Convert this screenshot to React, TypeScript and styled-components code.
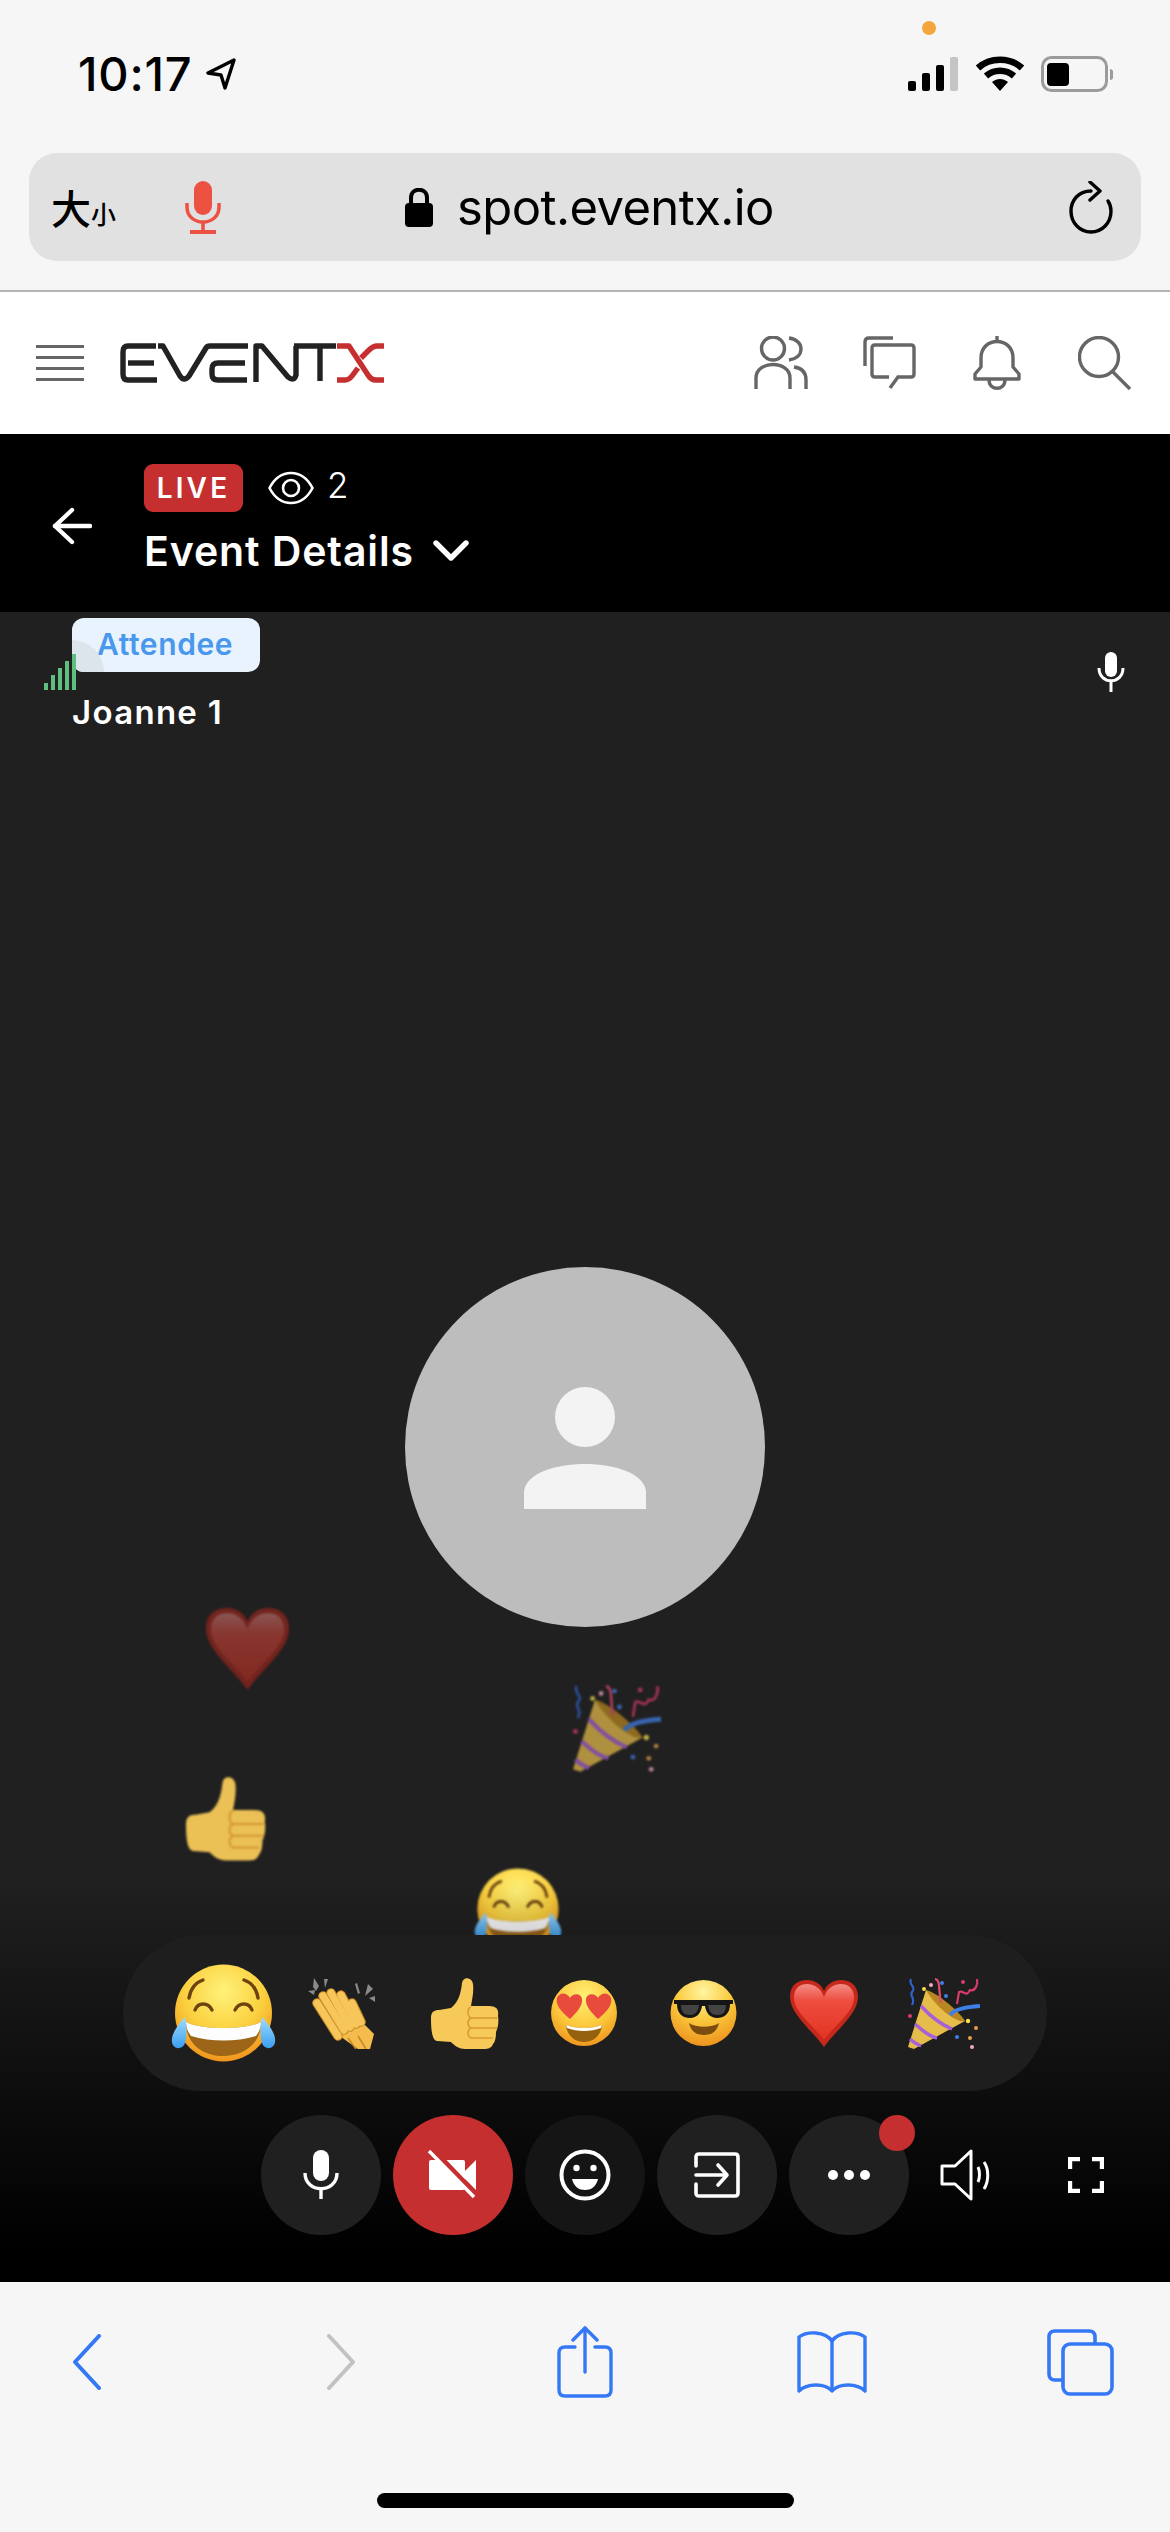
import React from 'react';
import styled, { createGlobalStyle } from 'styled-components';

const GlobalStyle = createGlobalStyle`
  html, body {
    margin: 0;
    padding: 0;
    background: #f6f6f6;
  }
  * {
    box-sizing: border-box;
  }
`;

const Page = styled.div`
  width: 1170px;
  height: 2532px;
  display: flex;
  flex-direction: column;
  overflow: hidden;
  font-family: Inter, 'Liberation Sans', sans-serif;
`;

const BrowserTop = styled.div`
  position: relative;
  height: 292px;
  flex: none;
  background: #f6f6f6;
  border-bottom: 2px solid #b4b4b4;
`;

const StatusBar = styled.div`
  display: flex;
  justify-content: space-between;
  align-items: center;
  height: 38px;
  margin-top: 55px;
  padding: 0 57px 0 78px;
`;

const ClockGroup = styled.div`
  display: flex;
  align-items: center;
  gap: 14px;
`;

const Clock = styled.span`
  font-size: 47px;
  font-weight: 500;
  line-height: 38px;
  letter-spacing: 0.8px;
  color: #000;
`;

const StatusIcons = styled.div`
  display: flex;
  align-items: center;
  gap: 16px;
`;

const PrivacyDot = styled.span`
  position: absolute;
  left: 922px;
  top: 21px;
  width: 14px;
  height: 14px;
  border-radius: 50%;
  background: #f3a63c;
`;

const UrlBar = styled.div`
  display: flex;
  align-items: center;
  height: 108px;
  margin: 60px 29px 0 29px;
  padding: 0 28px 0 22px;
  border-radius: 28px;
  background: #e1e1e1;
`;

const TextSize = styled.span`
  display: flex;
  align-items: baseline;
  width: 134px;
  font-family: 'Noto Sans CJK TC', sans-serif;
  font-weight: 500;
  color: #000;
`;

const TextSizeGlyph = styled.span<{ $size: number }>`
  font-size: ${(p) => p.$size}px;
  line-height: 1;
`;

const UrlCenter = styled.div`
  display: flex;
  align-items: center;
  gap: 24px;
  margin-left: 184px;
  flex: 1;
`;

const UrlText = styled.span`
  font-size: 49px;
  font-weight: 400;
  letter-spacing: -0.6px;
  color: #000;
`;

const SiteHeader = styled.header`
  display: flex;
  align-items: center;
  height: 142px;
  flex: none;
  padding: 0 38px 0 36px;
  background: #fff;
`;

const Burger = styled.div`
  display: flex;
  flex-direction: column;
  gap: 7.6px;
  width: 48px;
`;

const BurgerLine = styled.span`
  height: 3.4px;
  background: #666;
`;

const LogoMark = styled.svg`
  margin-left: 36px;
  margin-right: auto;
`;

const HeaderIcons = styled.div`
  display: flex;
  gap: 54px;
`;

const SessionBar = styled.div`
  display: flex;
  align-items: center;
  height: 178px;
  flex: none;
  padding: 0 0 8px 52px;
  background: #000;
`;

const BackArrow = styled.svg`
  margin-top: 14px;
`;

const SessionInfo = styled.div`
  display: flex;
  flex-direction: column;
  gap: 15px;
  margin-left: 52px;
`;

const SessionMeta = styled.div`
  display: flex;
  align-items: center;
`;

const LiveBadge = styled.span`
  display: flex;
  align-items: center;
  justify-content: center;
  width: 99px;
  height: 48px;
  border-radius: 9px;
  background: #c62f2f;
  color: #fff;
  font-size: 28px;
  font-weight: 600;
  letter-spacing: 3.2px;
`;

const EyeIcon = styled.svg`
  margin-left: 25px;
`;

const ViewerCount = styled.span`
  margin-left: 13px;
  color: #fff;
  font-size: 35px;
  font-weight: 300;
  line-height: 40px;
  margin-top: -6px;
`;

const SessionTitle = styled.div`
  display: flex;
  align-items: center;
  gap: 19px;
  color: #fff;
  font-size: 41px;
  font-weight: 600;
  line-height: 48px;
  letter-spacing: 0.9px;
`;

const Stage = styled.main`
  position: relative;
  flex: 1;
  display: flex;
  align-items: center;
  justify-content: center;
  background: #202020;
  overflow: hidden;
`;

const Participant = styled.div`
  position: absolute;
  left: 72px;
  top: 6px;
  display: flex;
  flex-direction: column;
  align-items: flex-start;
  gap: 22px;
`;

const RoleTag = styled.span`
  position: relative;
  display: block;
  width: 188px;
  height: 54px;
  padding-left: 25px;
  border-radius: 12px;
  background: #e8f3fd;
  color: #4a97ee;
  font-size: 30px;
  font-weight: 600;
  line-height: 52px;
  letter-spacing: 0.6px;
  overflow: hidden;
  &::before {
    content: '';
    position: absolute;
    left: -32px;
    bottom: -32px;
    width: 64px;
    height: 64px;
    border-radius: 50%;
    background: #dde5ec;
  }
`;

const ParticipantName = styled.span`
  color: #fff;
  font-size: 33px;
  font-weight: 600;
  line-height: 36px;
  letter-spacing: 1.3px;
`;

const SignalBars = styled.div`
  position: absolute;
  left: 44px;
  top: 42px;
  display: flex;
  align-items: flex-end;
  gap: 3px;
  height: 36px;
`;

const SignalBar = styled.span<{ $height: number }>`
  width: 4px;
  height: ${(p) => p.$height}px;
  background: #5fbf7f;
`;

const StageMic = styled.svg`
  position: absolute;
  right: 44px;
  top: 40px;
`;

const Avatar = styled.div`
  display: flex;
  align-items: center;
  justify-content: center;
  width: 360px;
  height: 360px;
  border-radius: 50%;
  background: #bdbdbd;
`;

const FlyingEmoji = styled.div<{ $left: number; $top: number; $fade: number }>`
  position: absolute;
  left: ${(p) => p.$left}px;
  top: ${(p) => p.$top}px;
  opacity: ${(p) => p.$fade};
  filter: blur(0.8px);
  line-height: 0;
`;

const StageBottom = styled.div`
  position: absolute;
  left: 0;
  right: 0;
  bottom: 0;
  height: 400px;
  padding-top: 53px;
  background: linear-gradient(to bottom, rgba(0, 0, 0, 0), rgba(0, 0, 0, 0.25) 20%, #000 92%);
`;

const ReactionBar = styled.div`
  display: flex;
  align-items: center;
  width: 924px;
  height: 156px;
  margin-left: 123px;
  padding: 0 0 0 48px;
  border-radius: 78px;
  background: #1e1e1e;
`;

const ReactionSlot = styled.span<{ $gap: number }>`
  display: flex;
  margin-left: ${(p) => p.$gap}px;
  line-height: 0;
`;

const Controls = styled.div`
  display: flex;
  align-items: center;
  gap: 12px;
  margin-top: 24px;
  padding-left: 261px;
`;

const RoundButton = styled.button<{ $bg: string }>`
  position: relative;
  display: flex;
  align-items: center;
  justify-content: center;
  width: 120px;
  height: 120px;
  padding: 0;
  border: none;
  border-radius: 50%;
  background: ${(p) => p.$bg};
`;

const NoticeDot = styled.span`
  position: absolute;
  right: -6px;
  top: 0;
  width: 36px;
  height: 36px;
  border-radius: 50%;
  background: #c62f2f;
`;

const PlainControl = styled.svg<{ $gap: number }>`
  margin-left: ${(p) => p.$gap}px;
`;

const BrowserBottom = styled.nav`
  position: relative;
  height: 250px;
  flex: none;
  background: #f6f6f6;
`;

const Toolbar = styled.div`
  display: flex;
  align-items: center;
  height: 72px;
  margin-top: 44px;
  padding-left: 72px;
`;

const ToolbarIcon = styled.svg<{ $gap: number }>`
  margin-left: ${(p) => p.$gap}px;
`;

const HomeBar = styled.span`
  position: absolute;
  left: 377px;
  bottom: 24px;
  width: 417px;
  height: 15px;
  border-radius: 8px;
  background: #000;
`;

const LocationArrow = () => (
  <svg width="30" height="32" viewBox="0 0 30 32" fill="none" stroke="#000" strokeWidth="3.4" strokeLinejoin="round">
    <path d="M28 2 L2 15 L15 17 L19 30 Z" />
  </svg>
);

const CellSignal = () => (
  <svg width="51" height="34" viewBox="0 0 51 34">
    <rect x="0" y="24" width="8" height="10" rx="2" fill="#000" />
    <rect x="14" y="16" width="8" height="18" rx="2" fill="#000" />
    <rect x="28" y="8" width="8" height="26" rx="2" fill="#000" />
    <rect x="42" y="0" width="8" height="34" rx="2" fill="#c4c4c4" />
  </svg>
);

const WifiIcon = () => (
  <svg width="50" height="36" viewBox="0 0 50 36" fill="none" stroke="#000" strokeWidth="6.5">
    <path d="M3 12 C15 1 35 1 47 12" />
    <path d="M11 20 C19 13 31 13 39 20" />
    <path d="M25 35 L17 26 C22 22 28 22 33 26 Z" fill="#000" stroke="none" />
  </svg>
);

const BatteryIcon = () => (
  <svg width="72" height="36" viewBox="0 0 72 36">
    <rect x="1.5" y="1.5" width="64" height="33" rx="9" fill="none" stroke="#9b9b9b" strokeWidth="3" />
    <rect x="6" y="7" width="22" height="23" rx="4" fill="#000" />
    <path d="M69 13 a3.5 5 0 0 1 0 11 Z" fill="#9b9b9b" />
  </svg>
);

const RedMic = () => (
  <svg width="36" height="53" viewBox="0 0 36 53" fill="none">
    <rect x="9" y="0" width="18" height="34" rx="9" fill="#ec5141" />
    <path d="M2 22 V26 C2 46 34 46 34 26 V22" stroke="#ec5141" strokeWidth="3.5" />
    <path d="M18 42 V50" stroke="#ec5141" strokeWidth="3.5" />
    <path d="M5 51 H31" stroke="#ec5141" strokeWidth="4" />
  </svg>
);

const LockIcon = () => (
  <svg width="28" height="39" viewBox="0 0 28 39" fill="none">
    <path d="M6 18 V10 C6 -1 22 -1 22 10 V18" stroke="#000" strokeWidth="4" />
    <rect x="0" y="15" width="28" height="24" rx="4" fill="#000" />
  </svg>
);

const ReloadIcon = () => (
  <svg width="44" height="53" viewBox="0 0 44 53" fill="none" stroke="#000" strokeWidth="3.4" strokeLinecap="round" strokeLinejoin="round">
    <path d="M22 10 C9 10 2 20 2 30 C2 42 11 51 22 51 C33 51 42 42 42 30 C42 26 41 23 39 20" />
    <path d="M21 1 L31 10 L21 19" />
  </svg>
);

const EventxLogo = () => (
  <LogoMark role="img" aria-label="EVENTX" width="264" height="40" viewBox="0 0 264 40" fill="none" strokeWidth="5.4" strokeLinejoin="round">
    <g stroke="#222">
      <path d="M36 3 H8 Q3 3 3 9 V31 Q3 37 8 37 H37" />
      <path d="M8 20 H34" />
      <path d="M38 3 H43 L60 33 Q64 39 69 33 L86 5 Q87 3 90 3 H128" />
      <path d="M127 37 H98 Q92 37 92 31 V26 Q92 20 98 20 H125" />
      <path d="M136 39 V3 H142 L168 34 Q174 39 176 32 V3" />
      <path d="M174 3 H216" />
      <path d="M200 3 V38" />
    </g>
    <g stroke="#c62f2f">
      <path d="M217 3 H229 L248 32 Q251 37 256 37 H264" />
      <path d="M264 3 H257 Q253 3 249 7 L241 15" />
      <path d="M217 37 H225 Q229 37 232 33 L238 25" />
    </g>
  </LogoMark>
);

const UsersIcon = () => (
  <svg width="54" height="54" viewBox="0 0 54 54" fill="none" stroke="#666" strokeWidth="3.4">
    <circle cx="19" cy="12.5" r="11.5" />
    <path d="M35 2 C43 3 47 8 47 13 C47 19 42 23 35 24" />
    <path d="M2 53 V42 C2 24 36 24 36 42 V53" />
    <path d="M40 31 C48 32 52 37 52 44 V53" />
  </svg>
);

const ChatIcon = () => (
  <svg width="54" height="54" viewBox="0 0 54 54" fill="none" stroke="#666" strokeWidth="3.4">
    <path d="M3 30 V6 Q3 2 7 2 H31" />
    <path d="M27 41 H13 Q10 41 10 38 V12 Q10 9 13 9 H49 Q52 9 52 12 V38 Q52 41 49 41 H36 L28 52" />
  </svg>
);

const BellIcon = () => (
  <svg width="54" height="54" viewBox="0 0 54 54" fill="none" stroke="#666" strokeWidth="3.4" strokeLinejoin="round">
    <path d="M27 0 V5" />
    <path d="M5 43 V38 L11 31 V22 C11 0 43 0 43 22 V31 L49 38 V43 Z" />
    <path d="M19 44 C19 55 35 55 35 44" />
  </svg>
);

const SearchIcon = () => (
  <svg width="54" height="54" viewBox="0 0 54 54" fill="none" stroke="#666" strokeWidth="3.4">
    <circle cx="21" cy="21" r="19.5" />
    <path d="M34 35 L52 53" />
  </svg>
);

const LeftArrow = () => (
  <BackArrow width="40" height="38" viewBox="0 0 40 38" fill="none" stroke="#fff" strokeWidth="4.4" strokeLinecap="round" strokeLinejoin="round">
    <path d="M38 19 H3" />
    <path d="M20 3 L3 19 L20 35" />
  </BackArrow>
);

const Eye = () => (
  <EyeIcon width="46" height="34" viewBox="0 0 46 34" fill="none" stroke="#fff" strokeWidth="2.6">
    <path d="M1.5 17 C12 -3 34 -3 44.5 17 C34 37 12 37 1.5 17 Z" />
    <circle cx="23" cy="17" r="8" />
  </EyeIcon>
);

const ChevronDown = () => (
  <svg width="36" height="22" viewBox="0 0 36 22" fill="none" stroke="#fff" strokeWidth="5.4" strokeLinecap="round" strokeLinejoin="round">
    <path d="M3 3 L18 18 L33 3" />
  </svg>
);

const SmallMic = () => (
  <StageMic width="30" height="40" viewBox="0 0 30 40" fill="none" stroke="#fff">
    <rect x="9" y="0" width="12" height="25" rx="6" fill="#fff" stroke="none" />
    <path d="M3 16 C3 33 27 33 27 16" strokeWidth="3" />
    <path d="M15 29 V40" strokeWidth="3" />
  </StageMic>
);

const PersonIcon = () => (
  <svg width="124" height="124" viewBox="0 0 124 124" fill="#f3f3f3">
    <circle cx="62" cy="32" r="30" />
    <path d="M1 124 V106 C6 70 118 70 123 106 V124 Z" />
  </svg>
);

const LaughEmoji = ({ size = 105 }: { size?: number }) => (
  <svg width={size} height={(size * 98) / 105} viewBox="0 0 105 98">
    <defs>
      <radialGradient id="lf" cx="50%" cy="28%" r="75%">
        <stop offset="0" stopColor="#fff27a" />
        <stop offset="0.55" stopColor="#fbd03e" />
        <stop offset="1" stopColor="#ef8f1a" />
      </radialGradient>
      <linearGradient id="lt" x1="0" y1="0" x2="0" y2="1">
        <stop offset="0" stopColor="#9fdcff" />
        <stop offset="1" stopColor="#3b9ff0" />
      </linearGradient>
    </defs>
    <circle cx="52.5" cy="49" r="48.5" fill="url(#lf)" />
    <g fill="none" stroke="#6d4410" strokeWidth="3.4" strokeLinecap="round">
      <path d="M18 34 C20 22 26 18 32 16" />
      <path d="M87 34 C85 22 79 18 73 16" />
      <path d="M24 46 C27 38 37 38 41 46" />
      <path d="M64 46 C68 38 78 38 81 46" />
    </g>
    <path d="M15 58 C30 66 75 66 90 58 C90 82 70 92 52 92 C34 92 15 82 15 58 Z" fill="#9c6518" />
    <path d="M15 58 C30 66 75 66 90 58 C90 64 88 68 85 72 C65 78 40 78 20 72 C17 68 15 64 15 58 Z" fill="#fdfdfd" />
    <path d="M14 53 C4 64 0 72 1 78 C2 86 12 86 14 79 C16 72 16 62 14 53 Z" fill="url(#lt)" />
    <path d="M91 53 C101 64 105 72 104 78 C103 86 93 86 91 79 C89 72 89 62 91 53 Z" fill="url(#lt)" />
  </svg>
);

const clapFingers = [
  'M9 25 L30 58',
  'M15 18 L36 52',
  'M23 15 L42 49',
  'M33 17 L48 46',
  'M44 25 L53 44',
];

const ClapEmoji = () => (
  <svg width="70" height="71" viewBox="0 0 70 71">
    <g fill="#8a8a8a">
      <path d="M6 0 L11 8 L8 13 L5 9 Z" />
      <path d="M16 1 L20 1 L17 10 Z" />
      <path d="M0 13 L7 12 L6 17 Z" />
      <path d="M49 5 L52 15 L50 16 L47 6 Z" />
      <path d="M60 6 L65 11 L57 18 Z" />
      <path d="M61 20 L67 18 L67 24 Z" />
    </g>
    <path d="M26 54 L50 40 L66 56 L62 71 L50 71 Z" fill="#f3bc4c" />
    <g fill="none" strokeLinecap="round">
      {clapFingers.map((d) => (
        <path key={`o${d}`} d={d} stroke="#c98a22" strokeWidth="9.6" />
      ))}
      {clapFingers.map((d) => (
        <path key={`f${d}`} d={d} stroke="#f6c65a" strokeWidth="7.4" />
      ))}
    </g>
    <path d="M40 60 L48 71 M50 58 L58 71" stroke="#c98a22" strokeWidth="1.6" />
  </svg>
);

const ThumbEmoji = ({ size = 68 }: { size?: number }) => (
  <svg width={size} height={(size * 71) / 68} viewBox="0 0 68 71">
    <path d="M0 40 C0 34 3 32 8 32 L20 30 C28 24 30 14 31 5 C32 -2 41 -1 42 6 C43 14 41 22 40 28 L58 28 C66 28 68 32 67 38 C68 44 67 50 65 54 C65 60 64 64 62 66 C60 71 56 71 50 71 L34 71 C28 71 24 68 20 64 L6 63 C2 62 0 56 0 40 Z" fill="#f6c958" />
    <g fill="none" stroke="#dc9c30" strokeWidth="1.6">
      <path d="M40 40 H66" />
      <path d="M40 50 H66" />
      <path d="M40 60 H62" />
      <path d="M40 29 C36 30 36 38 40 40 C36 42 36 48 40 50 C36 52 36 58 40 60" />
    </g>
  </svg>
);

const HeartEyesEmoji = () => (
  <svg width="66" height="66" viewBox="0 0 66 66">
    <defs>
      <radialGradient id="hf" cx="50%" cy="25%" r="80%">
        <stop offset="0" stopColor="#fff176" />
        <stop offset="0.55" stopColor="#fbc93c" />
        <stop offset="1" stopColor="#ee8e1b" />
      </radialGradient>
    </defs>
    <circle cx="33" cy="33" r="33" fill="url(#hf)" />
    <path d="M19 39 C10 32 4 24 6 18 C8 12 16 12 19 18 C22 13 30 13 31 19 C32 26 25 33 19 39 Z" fill="#e84a3c" />
    <path d="M47 39 C41 33 34 26 35 19 C36 13 44 13 47 18 C50 12 58 12 60 18 C62 24 56 32 47 39 Z" fill="#e84a3c" />
    <path d="M15 45 C25 49 41 49 51 45 C50 56 42 62 33 62 C24 62 16 56 15 45 Z" fill="#94610f" />
    <path d="M15 45 C25 49 41 49 51 45 L50 48 C40 52 26 52 16 48 Z" fill="#fdfdfd" />
  </svg>
);

const CoolEmoji = () => (
  <svg width="67" height="66" viewBox="0 0 67 66">
    <defs>
      <radialGradient id="cf" cx="50%" cy="18%" r="85%">
        <stop offset="0" stopColor="#fff5a0" />
        <stop offset="0.5" stopColor="#fbc93c" />
        <stop offset="1" stopColor="#ec8f1b" />
      </radialGradient>
    </defs>
    <circle cx="33.5" cy="33" r="33" fill="url(#cf)" />
    <path d="M4 20 H63 V24 L60 24 C60 34 54 38 47 38 C40 38 36 33 35 26 H32 C31 33 27 38 20 38 C13 38 7 34 7 24 L4 24 Z" fill="#151515" />
    <path d="M11 25 H29 C28 32 25 35 20 35 C14 35 11 32 11 25 Z M38 25 H56 C56 32 53 35 47 35 C42 35 39 32 38 25 Z" fill="#444" />
    <path d="M19 43 C26 48 42 48 49 43 C47 52 41 55 34 55 C27 55 21 52 19 43 Z" fill="#7a4c10" />
  </svg>
);

const HeartEmoji = ({ size = 68 }: { size?: number }) => (
  <svg width={size} height={(size * 67) / 68} viewBox="0 0 68 67">
    <defs>
      <linearGradient id="hr" x1="0" y1="0" x2="0" y2="1">
        <stop offset="0" stopColor="#f28d85" />
        <stop offset="0.3" stopColor="#ee4d3f" />
        <stop offset="1" stopColor="#e23322" />
      </linearGradient>
    </defs>
    <path d="M34 67 C22 50 0 34 0 17 C0 5 8 0 17 0 C25 0 31 4 34 11 C37 4 43 0 51 0 C60 0 68 5 68 17 C68 34 46 50 34 67 Z" fill="#c6281c" />
    <path d="M34 60 C24 46 4 32 4 18 C4 8 10 4 17 4 C25 4 31 9 34 17 C37 9 43 4 51 4 C58 4 64 8 64 18 C64 32 44 46 34 60 Z" fill="url(#hr)" />
  </svg>
);

const PartyEmoji = ({ size = 72 }: { size?: number }) => (
  <svg width={size} height={(size * 71) / 72} viewBox="0 0 72 71">
    <path d="M0 69 L18 12 L57 43 L6 71 Z" fill="#e6bc4a" />
    <path d="M18 12 C28 14 50 32 57 43 C50 46 28 30 18 12 Z" fill="#b8871f" />
    <g fill="none" stroke="#a660d8" strokeWidth="3.4">
      <path d="M13 28 C22 38 32 46 44 51" />
      <path d="M7 46 C14 52 20 58 29 60" />
      <path d="M2 61 C5 64 8 66 13 68" />
    </g>
    <path d="M42 37 C46 32 54 29 72 28" fill="none" stroke="#3f7fe6" strokeWidth="4" />
    <g fill="none" strokeWidth="2.2">
      <path d="M3 1 C0 7 9 9 4 14 C1 18 8 20 4 27" stroke="#2f62c8" />
      <path d="M27 1 C33 2 30 12 33 25" stroke="#e24a72" />
      <path d="M49 26 L51 14 C56 12 58 20 62 12 C68 14 70 5 69 1" stroke="#d93b6a" />
    </g>
    <g>
      <circle cx="16" cy="11" r="2" fill="#f5e04f" />
      <circle cx="23" cy="7" r="2" fill="#f3a8c8" />
      <circle cx="34" cy="5" r="2" fill="#3f7fe6" />
      <circle cx="38" cy="18" r="2" fill="#3f7fe6" />
      <circle cx="55" cy="4" r="2" fill="#d93b6a" />
      <circle cx="2" cy="38" r="2" fill="#d93b6a" />
      <circle cx="60" cy="43" r="2.2" fill="#f5e04f" />
      <circle cx="68" cy="50" r="2" fill="#e8a050" />
      <circle cx="49" cy="59" r="2" fill="#3f7fe6" />
      <circle cx="62" cy="60" r="2" fill="#e8a050" />
      <circle cx="64" cy="69" r="2" fill="#f3a8c8" />
    </g>
  </svg>
);

const MicGlyph = () => (
  <svg width="36" height="50" viewBox="0 0 36 50" fill="none" stroke="#fff">
    <rect x="10" y="0" width="16" height="31" rx="8" fill="#fff" stroke="none" />
    <path d="M2 23 C2 44 34 44 34 23" strokeWidth="3.4" />
    <path d="M18 38 V49" strokeWidth="3.4" />
  </svg>
);

const VideoOffGlyph = () => (
  <svg width="60" height="60" viewBox="0 0 60 60" fill="none">
    <rect x="6" y="15" width="36" height="30" rx="2" fill="#fff" />
    <path d="M41 27 L53 15 V45 L41 33 Z" fill="#fff" />
    <path d="M9 5 L54 52" stroke="#c62f2f" strokeWidth="7" />
    <path d="M6 6 L51 52" stroke="#fff" strokeWidth="3.4" />
  </svg>
);

const SmileGlyph = () => (
  <svg width="52" height="52" viewBox="0 0 52 52" fill="none">
    <circle cx="26" cy="26" r="23.5" stroke="#fff" strokeWidth="4" />
    <circle cx="17.5" cy="19" r="3.2" fill="#fff" />
    <circle cx="34.5" cy="19" r="3.2" fill="#fff" />
    <path d="M13 30 H39 C37 38 32 41 26 41 C20 41 15 38 13 30 Z" fill="#fff" />
  </svg>
);

const ExitGlyph = () => (
  <svg width="46" height="46" viewBox="0 0 46 46" fill="none" stroke="#fff" strokeWidth="3.6" strokeLinecap="round" strokeLinejoin="round">
    <path d="M2 14 V5 Q2 2 5 2 H41 Q44 2 44 5 V41 Q44 44 41 44 H5 Q2 44 2 41 V32" />
    <path d="M2 23 H32" />
    <path d="M24 13 L33 23 L24 33" />
  </svg>
);

const DotsGlyph = () => (
  <svg width="42" height="12" viewBox="0 0 42 12" fill="#fff">
    <circle cx="5" cy="6" r="5" />
    <circle cx="21" cy="6" r="5" />
    <circle cx="37" cy="6" r="5" />
  </svg>
);

const SpeakerGlyph = () => (
  <PlainControl $gap={19} width="54" height="52" viewBox="0 0 54 52" fill="none" stroke="#fff" strokeWidth="3">
    <path d="M2 17 H15 L31 2 V50 L15 35 H2 Z" strokeLinejoin="round" />
    <path d="M38 18 C40 22 40 29 38 33" />
    <path d="M44 13 C49 20 49 32 44 40" />
  </PlainControl>
);

const FullscreenGlyph = () => (
  <PlainControl $gap={62} width="36" height="36" viewBox="0 0 36 36" fill="none" stroke="#fff" strokeWidth="4.4">
    <path d="M2 12 V2 H12" />
    <path d="M24 2 H34 V12" />
    <path d="M2 24 V34 H12" />
    <path d="M24 34 H34 V24" />
  </PlainControl>
);

const signalHeights = [7, 15, 22, 29, 36];

const App = () => {
  return (
    <Page>
      <GlobalStyle />
      <BrowserTop>
        <PrivacyDot />
        <StatusBar>
          <ClockGroup>
            <Clock>10:17</Clock>
            <LocationArrow />
          </ClockGroup>
          <StatusIcons>
            <CellSignal />
            <WifiIcon />
            <BatteryIcon />
          </StatusIcons>
        </StatusBar>
        <UrlBar>
          <TextSize>
            <TextSizeGlyph $size={40}>大</TextSizeGlyph>
            <TextSizeGlyph $size={25}>小</TextSizeGlyph>
          </TextSize>
          <RedMic />
          <UrlCenter>
            <LockIcon />
            <UrlText>spot.eventx.io</UrlText>
          </UrlCenter>
          <ReloadIcon />
        </UrlBar>
      </BrowserTop>

      <SiteHeader>
        <Burger>
          <BurgerLine />
          <BurgerLine />
          <BurgerLine />
          <BurgerLine />
        </Burger>
        <EventxLogo />
        <HeaderIcons>
          <UsersIcon />
          <ChatIcon />
          <BellIcon />
          <SearchIcon />
        </HeaderIcons>
      </SiteHeader>

      <SessionBar>
        <LeftArrow />
        <SessionInfo>
          <SessionMeta>
            <LiveBadge>LIVE</LiveBadge>
            <Eye />
            <ViewerCount>2</ViewerCount>
          </SessionMeta>
          <SessionTitle>
            Event Details
            <ChevronDown />
          </SessionTitle>
        </SessionInfo>
      </SessionBar>

      <Stage>
        <Participant>
          <RoleTag>Attendee</RoleTag>
          <ParticipantName>Joanne 1</ParticipantName>
        </Participant>
        <SignalBars>
          {signalHeights.map((h) => (
            <SignalBar key={h} $height={h} />
          ))}
        </SignalBars>
        <SmallMic />
        <Avatar>
          <PersonIcon />
        </Avatar>

        <FlyingEmoji $left={206} $top={996} $fade={0.5}>
          <HeartEmoji size={83} />
        </FlyingEmoji>
        <FlyingEmoji $left={573} $top={1073} $fade={0.72}>
          <PartyEmoji size={88} />
        </FlyingEmoji>
        <FlyingEmoji $left={186} $top={1165} $fade={0.95}>
          <ThumbEmoji size={80} />
        </FlyingEmoji>
        <FlyingEmoji $left={474} $top={1256} $fade={1}>
          <LaughEmoji size={88} />
        </FlyingEmoji>

        <StageBottom>
          <ReactionBar>
            <LaughEmoji />
            <ReactionSlot $gap={32}>
              <ClapEmoji />
            </ReactionSlot>
            <ReactionSlot $gap={53}>
              <ThumbEmoji />
            </ReactionSlot>
            <ReactionSlot $gap={52}>
              <HeartEyesEmoji />
            </ReactionSlot>
            <ReactionSlot $gap={53}>
              <CoolEmoji />
            </ReactionSlot>
            <ReactionSlot $gap={53}>
              <HeartEmoji />
            </ReactionSlot>
            <ReactionSlot $gap={50}>
              <PartyEmoji />
            </ReactionSlot>
          </ReactionBar>
          <Controls>
            <RoundButton $bg="#202020">
              <MicGlyph />
            </RoundButton>
            <RoundButton $bg="#c62f2f">
              <VideoOffGlyph />
            </RoundButton>
            <RoundButton $bg="#151515">
              <SmileGlyph />
            </RoundButton>
            <RoundButton $bg="#202020">
              <ExitGlyph />
            </RoundButton>
            <RoundButton $bg="#202020">
              <DotsGlyph />
              <NoticeDot />
            </RoundButton>
            <SpeakerGlyph />
            <FullscreenGlyph />
          </Controls>
        </StageBottom>
      </Stage>

      <BrowserBottom>
        <Toolbar>
          <svg width="30" height="56" viewBox="0 0 30 56" fill="none" stroke="#3478f6" strokeWidth="4" strokeLinecap="round" strokeLinejoin="round">
            <path d="M27 2 L3 28 L27 54" />
          </svg>
          <ToolbarIcon $gap={224} width="30" height="56" viewBox="0 0 30 56" fill="none" stroke="#c2c2c2" strokeWidth="4" strokeLinecap="round" strokeLinejoin="round">
            <path d="M3 2 L27 28 L3 54" />
          </ToolbarIcon>
          <ToolbarIcon $gap={201} width="56" height="72" viewBox="0 0 56 72" fill="none" stroke="#3478f6" strokeWidth="3.4" strokeLinecap="round" strokeLinejoin="round">
            <path d="M18 21 H8 Q2 21 2 27 V64 Q2 70 8 70 H48 Q54 70 54 64 V27 Q54 21 48 21 H38" />
            <path d="M28 2 V46" />
            <path d="M16 14 L28 2 L40 14" />
          </ToolbarIcon>
          <ToolbarIcon $gap={184} width="70" height="62" viewBox="0 0 70 62" fill="none" stroke="#3478f6" strokeWidth="3.4" strokeLinejoin="round">
            <path d="M35 10 C28 0 10 0 2 6 V60 C10 52 28 52 35 60 C42 52 60 52 68 60 V6 C60 0 42 0 35 10 Z" />
            <path d="M35 10 V60" />
          </ToolbarIcon>
          <ToolbarIcon $gap={180} width="67" height="67" viewBox="0 0 67 67" fill="none" stroke="#3478f6" strokeWidth="3.6">
            <path d="M15 51 H8 Q2 51 2 45 V8 Q2 2 8 2 H42 Q48 2 48 8 V15" />
            <rect x="16" y="15" width="49" height="50" rx="7" />
          </ToolbarIcon>
        </Toolbar>
        <HomeBar />
      </BrowserBottom>
    </Page>
  );
};

export default App;
